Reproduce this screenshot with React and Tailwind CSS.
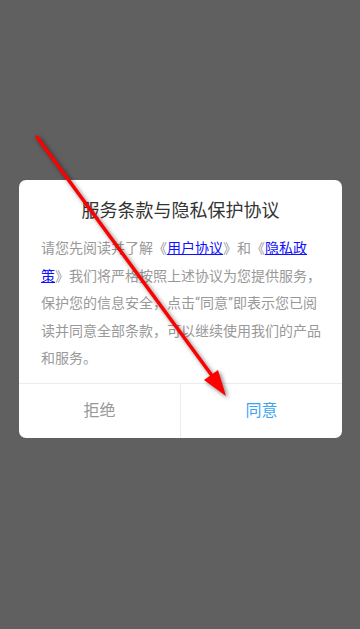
import React from 'react';

const font = { fontFamily: 'Roboto, "Noto Sans CJK SC", sans-serif' };

const Link = ({ children }) => <span className="text-[#1010ff] underline">{children}</span>;

// red annotation arrow drawn over the screenshot
const Arrow = () => (
  <svg
    className="absolute left-0 top-0 pointer-events-none drop-shadow-[2px_2px_2px_rgba(0,0,0,0.5)]"
    width="360"
    height="629"
    viewBox="0 0 360 629"
  >
    <line x1="37" y1="137" x2="213" y2="377" stroke="#ff0000" strokeWidth="3.5" strokeLinecap="round" />
    <polygon points="226,396 204,380 218,370" fill="#ff0000" />
  </svg>
);

export default function App() {
  const lines = [
    <>请您先阅读并了解《<Link>用户协议</Link>》和《<Link>隐私政</Link></>,
    <><Link>策</Link>》我们将严格按照上述协议为您提供服务，</>,
    <>保护您的信息安全，点击“同意”即表示您已阅</>,
    <>读并同意全部条款，可以继续使用我们的产品</>,
    <>和服务。</>,
  ];

  return (
    <div className="relative w-[360px] h-[629px] bg-[#606060] pt-[180px] overflow-hidden" style={font}>
      <div className="ml-[19px] w-[323px] bg-white rounded-[7px] overflow-hidden">
        <h2 className="pt-[19px] text-center text-[18px] leading-[23px] text-[#333333]">服务条款与隐私保护协议</h2>
        <div className="mt-[13px] pl-[22px] pb-[10px] text-[14px] leading-[27.5px] text-[#999999]">
          {lines.map((l, i) => (
            <div key={i} className="whitespace-nowrap">{l}</div>
          ))}
        </div>
        <div className="flex h-[55px] border-t border-[#ececec]">
          <button className="flex-1 text-[16px] text-[#999999]">拒绝</button>
          <button className="flex-1 border-l border-[#ececec] text-[16px] text-[#3aa5f4]">同意</button>
        </div>
      </div>
      <Arrow />
    </div>
  );
}
